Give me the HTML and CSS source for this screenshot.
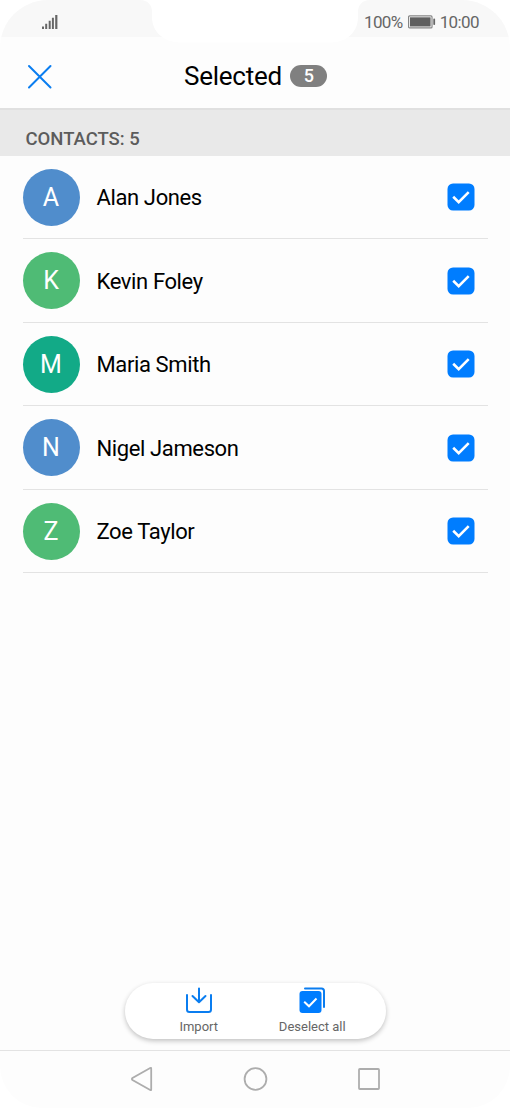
FILE: index.html
```html
<!DOCTYPE html>
<html lang="en">
<head>
<meta charset="utf-8">
<title>Selected contacts</title>
<link rel="stylesheet" href="styles.css">
</head>
<body>
<div class="phone">
  <div class="status">
    <svg class="signal" width="18" height="16" viewBox="0 0 18 16" fill="#666"><path d="M1 12.5h2V15H1zM4.2 9.7h2V15h-2zM7.7 6.7h2V15h-2zM10.9 3.8h2V15h-2zM14.2 1h2.2v14h-2.2z"/></svg>
    <span class="percent">100%</span>
    <svg class="battery" width="28" height="14" viewBox="0 0 28 14"><rect x=".6" y=".9" width="23.4" height="12" rx="1" fill="#fff" stroke="#858585" stroke-width="1.2"/><rect x="2" y="2.3" width="20.6" height="9.2" fill="#606060"/><rect x="25.3" y="3.6" width="1.8" height="6.5" rx=".8" fill="#666"/></svg>
    <span class="time">10:00</span>
  </div>
  <svg class="notch" width="232" height="44" viewBox="0 0 232 44"><path fill="#fff" d="M0 0C8 0 12 5 12 12V17C12 32 24 42 40 42.500H191C207 42 218 32 218 17V12C218 5 222 0 230 0Z"/></svg>
  <header class="header">
    <svg class="close" width="26" height="26" viewBox="0 0 26 26"><path d="M2 3 23.500 24.500M23.500 3 2 24.500" stroke="#0a7df0" stroke-width="2" stroke-linecap="round"/></svg>
    <h1 class="title">Selected</h1>
    <span class="count">5</span>
  </header>
  <div class="section">CONTACTS: 5</div>
  <ul class="list">
    <li class="row"><span class="avatar blue">A</span><span class="name">Alan Jones</span><svg class="check" viewBox="0 0 28 28"><rect x=".5" y=".5" width="27" height="27" rx="5.500" fill="#007dff"/><path d="M6.200 13.800 11.700 19.200 21.700 9.200" fill="none" stroke="#fff" stroke-width="2.600"/></svg></li>
    <li class="row"><span class="avatar green">K</span><span class="name">Kevin Foley</span><svg class="check" viewBox="0 0 28 28"><rect x=".5" y=".5" width="27" height="27" rx="5.500" fill="#007dff"/><path d="M6.200 13.800 11.700 19.200 21.700 9.200" fill="none" stroke="#fff" stroke-width="2.600"/></svg></li>
    <li class="row"><span class="avatar teal">M</span><span class="name">Maria Smith</span><svg class="check" viewBox="0 0 28 28"><rect x=".5" y=".5" width="27" height="27" rx="5.500" fill="#007dff"/><path d="M6.200 13.800 11.700 19.200 21.700 9.200" fill="none" stroke="#fff" stroke-width="2.600"/></svg></li>
    <li class="row"><span class="avatar blue">N</span><span class="name">Nigel Jameson</span><svg class="check" viewBox="0 0 28 28"><rect x=".5" y=".5" width="27" height="27" rx="5.500" fill="#007dff"/><path d="M6.200 13.800 11.700 19.200 21.700 9.200" fill="none" stroke="#fff" stroke-width="2.600"/></svg></li>
    <li class="row"><span class="avatar green">Z</span><span class="name">Zoe Taylor</span><svg class="check" viewBox="0 0 28 28"><rect x=".5" y=".5" width="27" height="27" rx="5.500" fill="#007dff"/><path d="M6.200 13.800 11.700 19.200 21.700 9.200" fill="none" stroke="#fff" stroke-width="2.600"/></svg></li>
  </ul>
  <div class="toolbar">
    <div class="action">
      <svg width="28" height="28" viewBox="0 0 28 28" fill="none" stroke="#0a7df0" stroke-width="2" stroke-linecap="round" stroke-linejoin="round"><path d="M2 8V22.500Q2 25 4.500 25H23.500Q26 25 26 22.500V8M14 1.500V15M7.500 9 14 15.300 20.500 9"/></svg>
      <span>Import</span>
    </div>
    <div class="action">
      <svg width="28" height="28" viewBox="0 0 28 28" fill="none"><path d="M7 1.500H23.500Q26 1.500 26 4V20" stroke="#0a7df0" stroke-width="2" stroke-linecap="round"/><rect x="1.500" y="4" width="22" height="22" rx="3" fill="#007dff"/><path d="M6.200 14.700 11 19.300 18.500 11.500" stroke="#fff" stroke-width="2"/></svg>
      <span>Deselect all</span>
    </div>
  </div>
  <nav class="nav">
    <svg width="26" height="26" viewBox="0 0 26 26"><path d="M21.200 2.500V23.500Q21.200 24.500 20.200 24L2.500 14Q1.300 13 2.500 12L20.200 2Q21.200 1.500 21.200 2.500Z"/></svg>
    <svg width="26" height="26" viewBox="0 0 26 26"><circle cx="12.500" cy="13" r="10.900"/></svg>
    <svg width="26" height="26" viewBox="0 0 26 26"><rect x="3" y="3" width="20" height="20" rx=".8"/></svg>
  </nav>
</div>
</body>
</html>
```
FILE: styles.css
```css
* { box-sizing: border-box; }
body { margin: 0; background: #fff; font-family: Roboto, sans-serif; }
.phone {
  position: relative;
  display: flex;
  flex-direction: column;
  width: 510px;
  height: 1108px;
  background: #fdfdfd;
  border-radius: 48px 48px 42px 42px;
  overflow: hidden;
}
.status {
  display: flex;
  align-items: center;
  height: 37px;
  padding: 6px 31px 0 41px;
  background: #f8f8f8;
  color: #666;
  font-size: 17px;
  line-height: 20px;
  letter-spacing: -.6px;
}
.percent { margin-left: auto; }
.battery { margin: 0 4px 0 5px; }
.header {
  display: flex;
  align-items: center;
  height: 71px;
  padding: 7px 27px 0;
}
.notch { position: absolute; left: 140px; top: 0; }
.title { margin: 0 0 0 131px; font-size: 26px; line-height: 32px; font-weight: 400; letter-spacing: -.25px; color: #000; }
.count {
  width: 37px;
  height: 22px;
  margin-left: 8.5px;
  border-radius: 11px;
  background: #808080;
  color: #fff;
  font-size: 18px;
  line-height: 22px;
  font-weight: 500;
  text-align: center;
}
.section {
  height: 48px;
  padding: 19px 25.5px 0;
  border-top: 2px solid #e0e0e0;
  background: #e9e9e9;
  color: #5c5c5c;
  font-size: 18.5px;
  line-height: 20px;
  font-weight: 500;
  letter-spacing: -.02px;
}
.list { margin: 0; padding: 0 22px 0 22.5px; list-style: none; }
.row {
  display: flex;
  align-items: center;
  height: 83.4px;
  padding: .5px 13px 0 0;
  border-bottom: 1px solid #e3e3e3;
}
.avatar {
  width: 57px;
  height: 57px;
  border-radius: 50%;
  color: #fff;
  font-size: 25px;
  line-height: 58.5px;
  text-align: center;
}
.blue { background: #508dcc; }
.green { background: #4fbb75; }
.teal { background: #12aa87; }
.name { margin-left: 17px; padding-top: 2px; font-size: 22px; line-height: 28px; letter-spacing: -.38px; color: #000; }
.check { width: 28px; height: 28px; margin-left: auto; }
.toolbar {
  display: flex;
  justify-content: center;
  width: 261px;
  height: 56px;
  margin: auto auto 11.5px 125px;
  padding-top: 4px;
  border-radius: 28px;
  background: #fff;
  box-shadow: 0 2px 5px rgba(0, 0, 0, .24);
}
.action {
  display: flex;
  flex-direction: column;
  align-items: center;
  width: 113.5px;
  color: #666;
  font-size: 13px;
  line-height: 16px;
  gap: 4px;
}
.action svg { flex: none; }
.nav {
  display: flex;
  justify-content: space-between;
  height: 58px;
  padding: 15px 128.5px 0 129.5px;
  border-top: 1px solid #e3e3e3;
}
.nav svg { fill: none; stroke: #adadad; stroke-width: 1.8; }
```
